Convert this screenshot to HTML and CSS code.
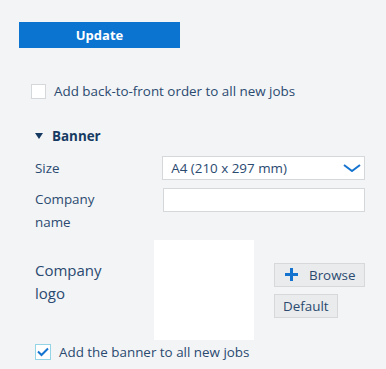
FILE: index.html
```html
<!DOCTYPE html>
<html lang="en">

<head>
    <meta charset="UTF-8">
    <meta name="viewport" content="width=device-width, initial-scale=1.0">
    <title>Banner settings</title>
    <link rel="stylesheet" href="styles.css">
</head>

<body>
    <div class="page">
        <button class="update">Update</button>

        <label class="option">
            <span class="box"></span>
            <span>Add back-to-front order to all new jobs</span>
        </label>

        <div class="banner">
            <div class="banner-title">
                <span class="caret"></span>
                <span>Banner</span>
            </div>

            <div class="row">
                <div class="label">Size</div>
                <div class="select">
                    <span>A4 (210 x 297 mm)</span>
                    <svg class="chevron" width="18" height="8" viewBox="0 0 18 8">
                        <path d="M1 1 L9 7 L17 1" fill="none" stroke="#1473cf" stroke-width="2"/>
                    </svg>
                </div>
            </div>

            <div class="row top">
                <div class="label">Company<br>name</div>
                <div class="input"></div>
            </div>

            <div class="logo-row">
                <div class="label big">Company<br>logo</div>
                <div class="logo"></div>
                <div class="logo-btns">
                    <button class="btn">
                        <svg width="13" height="13" viewBox="0 0 13 13">
                            <path d="M6.5 0 V13 M0 6.5 H13" stroke="#1473cf" stroke-width="3"/>
                        </svg>
                        Browse
                    </button>
                    <button class="btn">Default</button>
                </div>
            </div>

            <label class="option checked">
                <span class="box">
                    <svg width="12" height="10" viewBox="0 0 12 10">
                        <path d="M1 4.5 L4.5 8 L11 1.5" fill="none" stroke="#1473cf" stroke-width="2"/>
                    </svg>
                </span>
                <span>Add the banner to all new jobs</span>
            </label>
        </div>
    </div>
</body>

</html>
```

FILE: styles.css
```css
body {
    margin: 0;
    background: #f3f4f6;
    font-family: "Open Sans", "Noto Sans", sans-serif;
    font-size: 13.4px;
    color: #2a4a70;
}

.page {
    padding: 22px 21px 0 19px;
}

.update {
    display: block;
    width: 161px;
    height: 26px;
    border: none;
    background: #0b74d1;
    color: #fff;
    font-family: inherit;
    font-weight: 700;
    font-size: 13px;
    padding: 0;
}

.option {
    display: flex;
    align-items: center;
    gap: 8px;
    margin: 34px 0 0 12px;
}

.box {
    width: 13px;
    height: 13px;
    border: 1px solid #d5d8db;
    background: #fff;
    display: flex;
    align-items: center;
    justify-content: center;
}

.banner {
    padding-left: 16px;
    margin-top: 27px;
}

.banner-title {
    display: flex;
    align-items: center;
    gap: 9px;
    font-weight: 700;
    color: #173a63;
}

.caret {
    width: 0;
    height: 0;
    border-left: 4px solid transparent;
    border-right: 4px solid transparent;
    border-top: 6px solid #173a63;
}

.row {
    display: flex;
    align-items: center;
    margin-top: 11px;
}

.row.top {
    align-items: flex-start;
    margin-top: 8px;
}

.label {
    width: 128px;
    line-height: 23px;
}

.select,
.input {
    width: 200px;
    height: 22px;
    border: 1px solid #d5d8db;
    background: #fff;
}

.select {
    display: flex;
    align-items: center;
    justify-content: space-between;
    padding: 0 3px 0 8px;
    width: 191px;
}

.logo-row {
    display: flex;
    align-items: center;
    margin-top: 6px;
}

.label.big {
    width: 119px;
    font-size: 15px;
    margin-bottom: 16px;
}

.logo {
    width: 100px;
    height: 100px;
    background: #fff;
}

.logo-btns {
    display: flex;
    flex-direction: column;
    align-items: flex-start;
    gap: 7px;
    margin-left: 20px;
}

.btn {
    height: 24px;
    border: 1px solid #d6d8da;
    background: #e9ebec;
    color: #2a4a70;
    font-family: inherit;
    font-size: 13.4px;
    padding: 0 8px;
    display: flex;
    align-items: center;
    gap: 11px;
}

.btn:first-child {
    width: 91px;
    padding-left: 10px;
}

.option.checked {
    margin: 3px 0 0 0;
}

.option.checked .box {
    width: 14px;
    height: 14px;
    border-color: #93d4e6;
}
```
